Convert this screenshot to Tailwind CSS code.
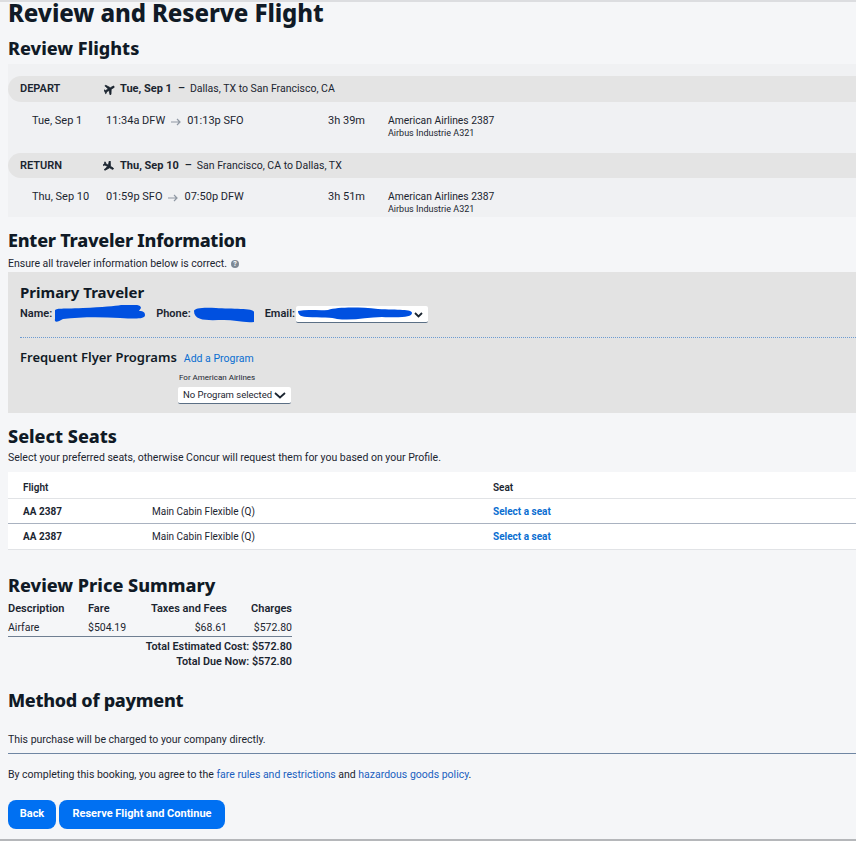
<!DOCTYPE html>
<html lang="en">
<head>
    <meta charset="UTF-8">
    <title>Review and Reserve Flight</title>
    <script src="https://cdn.jsdelivr.net/npm/@tailwindcss/browser@4"></script>
</head>
<body class="font-['Roboto',sans-serif] bg-[#f5f6f8] text-[#1b2530] text-[11px] h-[841px] overflow-hidden">
    <div class="h-[841px] flex flex-col border-t-2 border-t-[#dcdde0] border-b-2 border-b-[#b5b7ba] pl-2 overflow-hidden">
        <!-- Title -->
        <h1 class="h-[27px] leading-[21px] font-['Noto_Sans',sans-serif] text-[24px] font-extrabold tracking-[-0.1px] text-[#101a26]">Review and Reserve Flight</h1>
        <h2 class="h-[35px] pt-[4px] leading-[30px] font-['Noto_Sans',sans-serif] text-[18px] font-extrabold text-[#101a26]">Review Flights</h2>

        <!-- Flights -->
        <section class="h-[153px] bg-[#f0f1f3] pt-3">
            <div class="h-[26px] flex items-center bg-[#e4e4e4] rounded-l-[13px]">
                <span class="w-[96px] pl-3 font-semibold">DEPART</span>
                <svg class="w-[11px] h-[11px] mr-[5px]" viewBox="2 2 20 20" fill="#1b2530" stroke="#1b2530" stroke-width="1.200"><path transform="rotate(60 12 12)" d="M21 16v-2l-8-5V3.500c0-.83-.67-1.500-1.500-1.500S10 2.670 10 3.500V9l-8 5v2l8-2.500V19l-2 1.500V22l3.500-1 3.500 1v-1.500L13 19v-5.500l8 2.500z"/></svg>
                <span class="font-bold">Tue, Sep 1</span>
                <span class="ml-[6px] mr-[5px] font-semibold">–</span>
                <span class="text-[10.5px]">Dallas, TX to San Francisco, CA</span>
            </div>
            <div class="h-[51px] flex pt-[11px]">
                <span class="w-[98px] pl-6">Tue, Sep 1</span>
                <span class="w-[222px] flex items-start h-4">11:34a DFW <svg class="w-[10px] h-[8px] mx-[6px] mt-[5px]" viewBox="0 0 10 8" fill="none" stroke="#8f98a3" stroke-width="1.200"><path d="M0 4h9M6 1l3 3-3 3"/></svg> 01:13p SFO</span>
                <span class="w-[60px]">3h 39m</span>
                <div class="leading-[14px] pt-[1px]">
                    <div class="text-[10.3px]">American Airlines 2387</div>
                    <div class="text-[9px] leading-[11px]">Airbus Industrie A321</div>
                </div>
            </div>
            <div class="h-[25px] flex items-center pt-[1px] bg-[#e4e4e4] rounded-l-[13px]">
                <span class="w-[95px] pl-3 font-semibold">RETURN</span>
                <svg class="w-[11px] h-[11px] mr-[5px]" viewBox="2 2 20 20" fill="#1b2530" stroke="#1b2530" stroke-width="1.200"><path transform="rotate(120 12 12)" d="M21 16v-2l-8-5V3.500c0-.83-.67-1.500-1.500-1.500S10 2.670 10 3.500V9l-8 5v2l8-2.500V19l-2 1.500V22l3.500-1 3.500 1v-1.500L13 19v-5.500l8 2.500z"/></svg>
                <span class="font-bold ml-[1px]">Thu, Sep 10</span>
                <span class="ml-[6px] mr-[5px] font-semibold">–</span>
                <span class="text-[10.5px]">San Francisco, CA to Dallas, TX</span>
            </div>
            <div class="h-[39px] flex pt-[11px]">
                <span class="w-[98px] pl-6">Thu, Sep 10</span>
                <span class="w-[222px] flex items-start h-4">01:59p SFO <svg class="w-[10px] h-[8px] mx-[6px] mt-[5px]" viewBox="0 0 10 8" fill="none" stroke="#8f98a3" stroke-width="1.200"><path d="M0 4h9M6 1l3 3-3 3"/></svg> 07:50p DFW</span>
                <span class="w-[60px]">3h 51m</span>
                <div class="leading-[14px] pt-[1px]">
                    <div class="text-[10.3px]">American Airlines 2387</div>
                    <div class="text-[9px] leading-[11px]">Airbus Industrie A321</div>
                </div>
            </div>
        </section>

        <!-- Traveler -->
        <h2 class="h-[32px] pt-[8px] leading-[30px] font-['Noto_Sans',sans-serif] text-[18px] font-extrabold tracking-[-0.25px] text-[#101a26]">Enter Traveler Information</h2>
        <p class="h-[23px] pt-[7px] leading-[18px] text-[10.5px] flex items-center gap-1">Ensure all traveler information below is correct.
            <span class="w-2 h-2 rounded-full bg-[#7d8894] text-white text-[7px] leading-2 text-center font-bold">?</span>
        </p>
        <section class="h-[141px] bg-[#e3e3e3] pt-[11px]">
            <div class="pl-3 font-['Noto_Sans',sans-serif] text-[15px] leading-[18px] font-bold text-[#101a26]">Primary Traveler</div>
            <div class="h-[24px] pl-3 pt-[2px] flex items-center font-semibold">
                <span>Name:</span>
                <svg class="w-[92px] h-[19px] mr-[11px] ml-[1px]" viewBox="0 0 92 19"><path d="M2 6c0-3 4-2 28-3 20-1 32-2 38-3 10-1 20-1 20 3l-2 3c5 0 6 2 6 4 0 4-8 4-25 3-20-1-40-1-57 1-5 3-9 4-8 0 0-4 0-6 0-8z" fill="#0050e0"/></svg>
                <span>Phone:</span>
                <svg class="w-[62px] h-[18px] mr-[10px] ml-[2px]" viewBox="0 0 62 18"><path d="M1 6c0-3 10-4 22-3 15 1 38 0 38 4v10c-10 1-20-2-30-2-14 0-30 2-30-9z" fill="#0050e0"/></svg>
                <span>Email:</span>
                <div class="relative ml-[1px] w-[132px] h-[17px] bg-white rounded-[2px] border-b border-b-[#5b6f85]">
                    <svg class="absolute left-[1px] top-[1px] w-[116px] h-[14px]" viewBox="0 0 116 14"><path d="M1 4c10-2 20 0 30-1 10-3 30-3 50-1 20 1 34 0 34 4 0 4-10 5-30 4-15 0-28 4-45 2-5-2-15-1-30-2-8 0-9-4-9-6z" fill="#0050e0"/></svg>
                    <svg class="absolute right-[5px] top-[6px] w-[9px] h-[6px]" viewBox="0 0 9 6" fill="none" stroke="#1b2530" stroke-width="1.800"><path d="M1 1l3.500 3.500L8 1"/></svg>
                </div>
            </div>
            <div class="mt-[12px] ml-3 border-t border-dotted border-t-[#6d9bd1]"></div>
            <div class="h-[34px] pl-3 pt-[5px] flex items-center gap-[7px]">
                <span class="font-['Noto_Sans',sans-serif] text-[13px] font-semibold text-[#101a26]">Frequent Flyer Programs</span>
                <a class="text-[10.5px] pt-[2px] text-[#0a6ed1]">Add a Program</a>
            </div>
            <div class="pl-[170px]">
                <div class="ml-[1px] text-[8px] leading-[12px] h-[15px]">For American Airlines</div>
                <div class="w-[113px] h-[17px] bg-white rounded-[2px] border-b border-b-[#5b6f85] flex items-center justify-between pl-[5px] pr-[5px] text-[9.5px] whitespace-nowrap">
                    No Program selected
                    <svg class="w-[12px] h-[7px]" viewBox="0 0 12 7" fill="none" stroke="#1b2530" stroke-width="1.800"><path d="M1 1l5 4.500L11 1"/></svg>
                </div>
            </div>
        </section>

        <!-- Seats -->
        <h2 class="h-[33px] pt-[10px] leading-[27px] font-['Noto_Sans',sans-serif] text-[18px] font-extrabold text-[#101a26]">Select Seats</h2>
        <p class="h-[26px] leading-[24px] text-[10.5px]">Select your preferred seats, otherwise Concur will request them for you based on your Profile.</p>
        <section class="bg-white text-[10px]">
            <div class="h-[27px] flex items-center pl-[15px] pt-[4px] border-b border-b-[#e1e3e6] font-semibold">
                <span class="w-[470px]">Flight</span>
                <span>Seat</span>
            </div>
            <div class="h-[25px] flex items-center pl-[15px] border-b border-b-[#a9b2c0]">
                <span class="w-[129px] font-bold">AA 2387</span>
                <span class="w-[341px]">Main Cabin Flexible (Q)</span>
                <a class="font-bold text-[#0a6ed1]">Select a seat</a>
            </div>
            <div class="h-[26px] flex items-center pl-[15px] border-b border-b-[#e1e3e6]">
                <span class="w-[129px] font-bold">AA 2387</span>
                <span class="w-[341px]">Main Cabin Flexible (Q)</span>
                <a class="font-bold text-[#0a6ed1]">Select a seat</a>
            </div>
        </section>

        <!-- Price -->
        <h2 class="h-[46px] pt-[23px] leading-[25px] font-['Noto_Sans',sans-serif] text-[18px] font-extrabold text-[#101a26]">Review Price Summary</h2>
        <div class="w-[284px] text-[11px]">
            <div class="h-[24px] pt-[3px] flex items-center font-semibold">
                <span class="w-[80px]">Description</span>
                <span class="w-[50px]">Fare</span>
                <span class="w-[89px] text-right">Taxes and Fees</span>
                <span class="w-[65px] text-right">Charges</span>
            </div>
            <div class="h-[17px] flex items-center text-[10.5px] border-b border-b-[#6f7f92]">
                <span class="w-[80px]">Airfare</span>
                <span class="w-[50px]">$504.19</span>
                <span class="w-[89px] text-right">$68.61</span>
                <span class="w-[65px] text-right">$572.80</span>
            </div>
            <div class="h-[17px] leading-[19px] text-right font-semibold text-[10.8px]">Total Estimated Cost: $572.80</div>
            <div class="h-[15px] leading-[15px] text-right font-semibold text-[10.8px]">Total Due Now: $572.80</div>
        </div>

        <!-- Payment -->
        <h2 class="h-[48px] pt-[19px] leading-[25px] font-['Noto_Sans',sans-serif] text-[18px] font-extrabold tracking-[-0.3px] text-[#101a26]">Method of payment</h2>
        <p class="h-[37px] pt-[12px] leading-[22px] text-[10.5px] border-b border-b-[#6f86a3]">This purchase will be charged to your company directly.</p>
        <p class="h-[33px] pt-[9px] leading-[24px] text-[10.5px]">By completing this booking, you agree to the <a class="text-[#1a5fc0]">fare rules and restrictions</a> and <a class="text-[#1a5fc0]">hazardous goods policy</a>.</p>
        <div class="flex gap-[3px] mt-[13px] text-white font-bold">
            <button class="w-[48px] h-[29px] bg-[#0070f2] rounded-lg">Back</button>
            <button class="w-[166px] h-[29px] bg-[#0070f2] rounded-lg">Reserve Flight and Continue</button>
        </div>
    </div>
</body>
</html>
